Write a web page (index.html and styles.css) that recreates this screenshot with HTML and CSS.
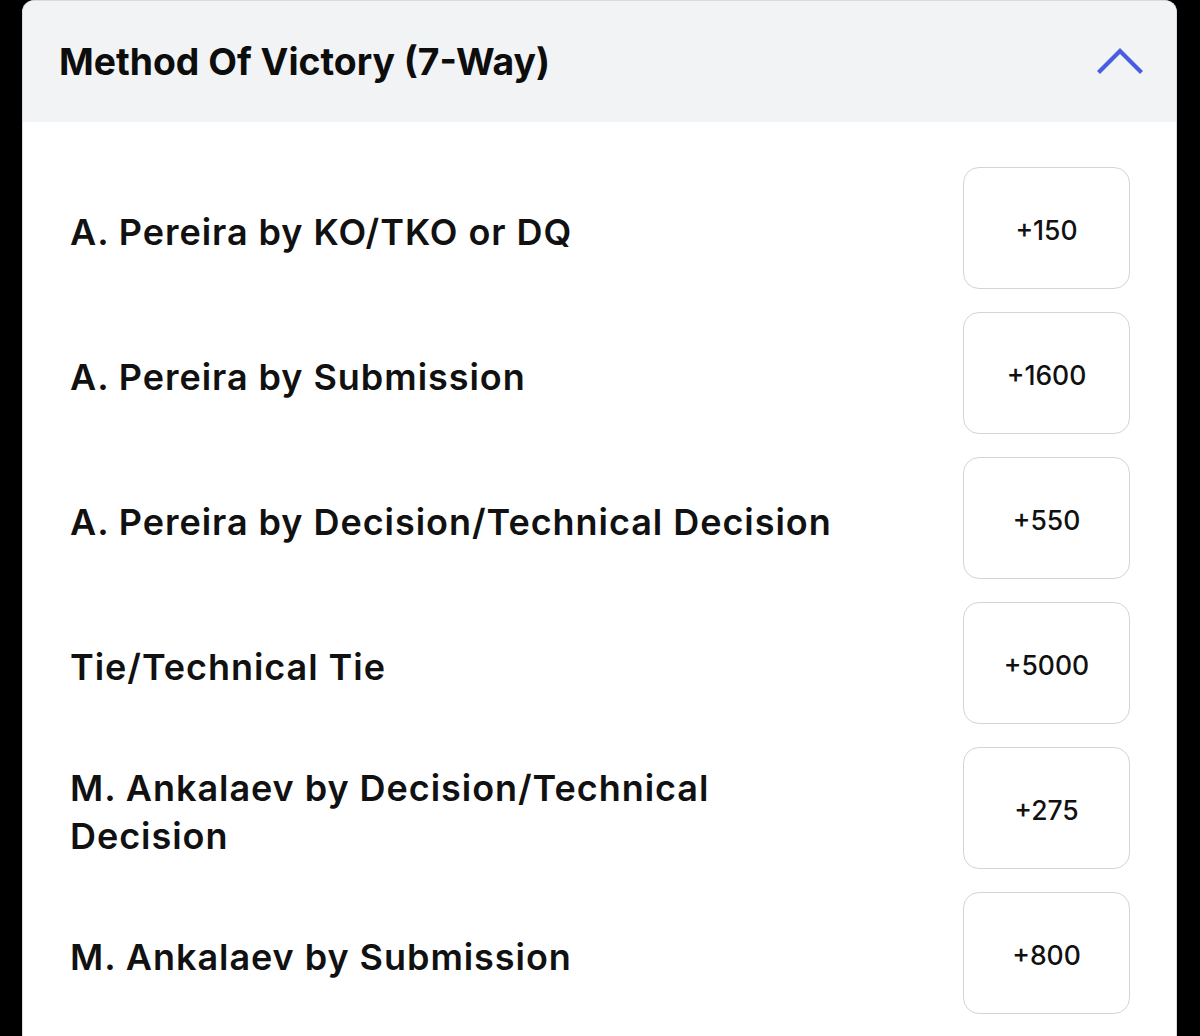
FILE: index.html
```html
<!DOCTYPE html>
<html lang="en">
<head>
<meta charset="utf-8">
<title>Method Of Victory</title>
<link rel="stylesheet" href="styles.css">
</head>
<body>
<section class="card">
  <header class="card-head">
    <h2 class="title">Method Of Victory (7-Way)</h2>
    <svg class="chevron" width="46" height="28" viewBox="0 0 46 28" aria-hidden="true">
      <path d="M1.5 25.5 L23 4 L44.5 25.5" fill="none" stroke="#4a5ce0" stroke-width="4.2" stroke-linecap="butt" stroke-linejoin="miter"/>
    </svg>
  </header>
  <div class="rows">
    <div class="row"><span class="label">A. Pereira by KO/TKO or DQ</span><button class="odds">+150</button></div>
    <div class="row"><span class="label">A. Pereira by Submission</span><button class="odds">+1600</button></div>
    <div class="row"><span class="label">A. Pereira by Decision/Technical Decision</span><button class="odds">+550</button></div>
    <div class="row"><span class="label">Tie/Technical Tie</span><button class="odds">+5000</button></div>
    <div class="row"><span class="label">M. Ankalaev by Decision/Technical Decision</span><button class="odds">+275</button></div>
    <div class="row"><span class="label">M. Ankalaev by Submission</span><button class="odds">+800</button></div>
  </div>
</section>
</body>
</html>
```
FILE: styles.css
```css
html, body {
  margin: 0;
  padding: 0;
  background: #000;
  height: 1036px;
  overflow: hidden;
}
body {
  font-family: "Inter", "Liberation Sans", sans-serif;
  color: #111;
}
.card {
  margin-left: 22px;
  width: 1155px;
  min-height: 1036px;
  box-sizing: border-box;
  background: #fff;
  border: 1px solid #d9dadd;
  border-bottom: none;
  border-radius: 12px 12px 0 0;
  overflow: hidden;
}
.card-head {
  height: 121px;
  box-sizing: border-box;
  background: #f2f3f5;
  display: flex;
  align-items: center;
  justify-content: space-between;
  padding: 0 33px 0 36px;
}
.title {
  margin: 0;
  font-size: 37.3px;
  font-weight: 700;
  letter-spacing: 0;
  color: #0d0d0d;
}
.chevron {
  display: block;
  margin-top: -2px;
}
.rows {
  display: flex;
  flex-direction: column;
  gap: 23px;
  padding: 45px 46px 40px 47px;
}
.row {
  display: flex;
  align-items: center;
  justify-content: space-between;
  min-height: 122px;
}
.label {
  max-width: 790px;
  font-size: 36px;
  font-weight: 600;
  letter-spacing: 0.95px;
  line-height: 48px;
  color: #111;
  padding-top: 8px;
}
.odds {
  flex: none;
  width: 167px;
  height: 122px;
  background: #fff;
  border: 1.5px solid #d4d4d6;
  border-radius: 16px;
  font-family: "Inter", "Liberation Sans", sans-serif;
  font-size: 26.5px;
  font-weight: 500;
  color: #111;
  padding: 4px 0 0 0;
}
```
